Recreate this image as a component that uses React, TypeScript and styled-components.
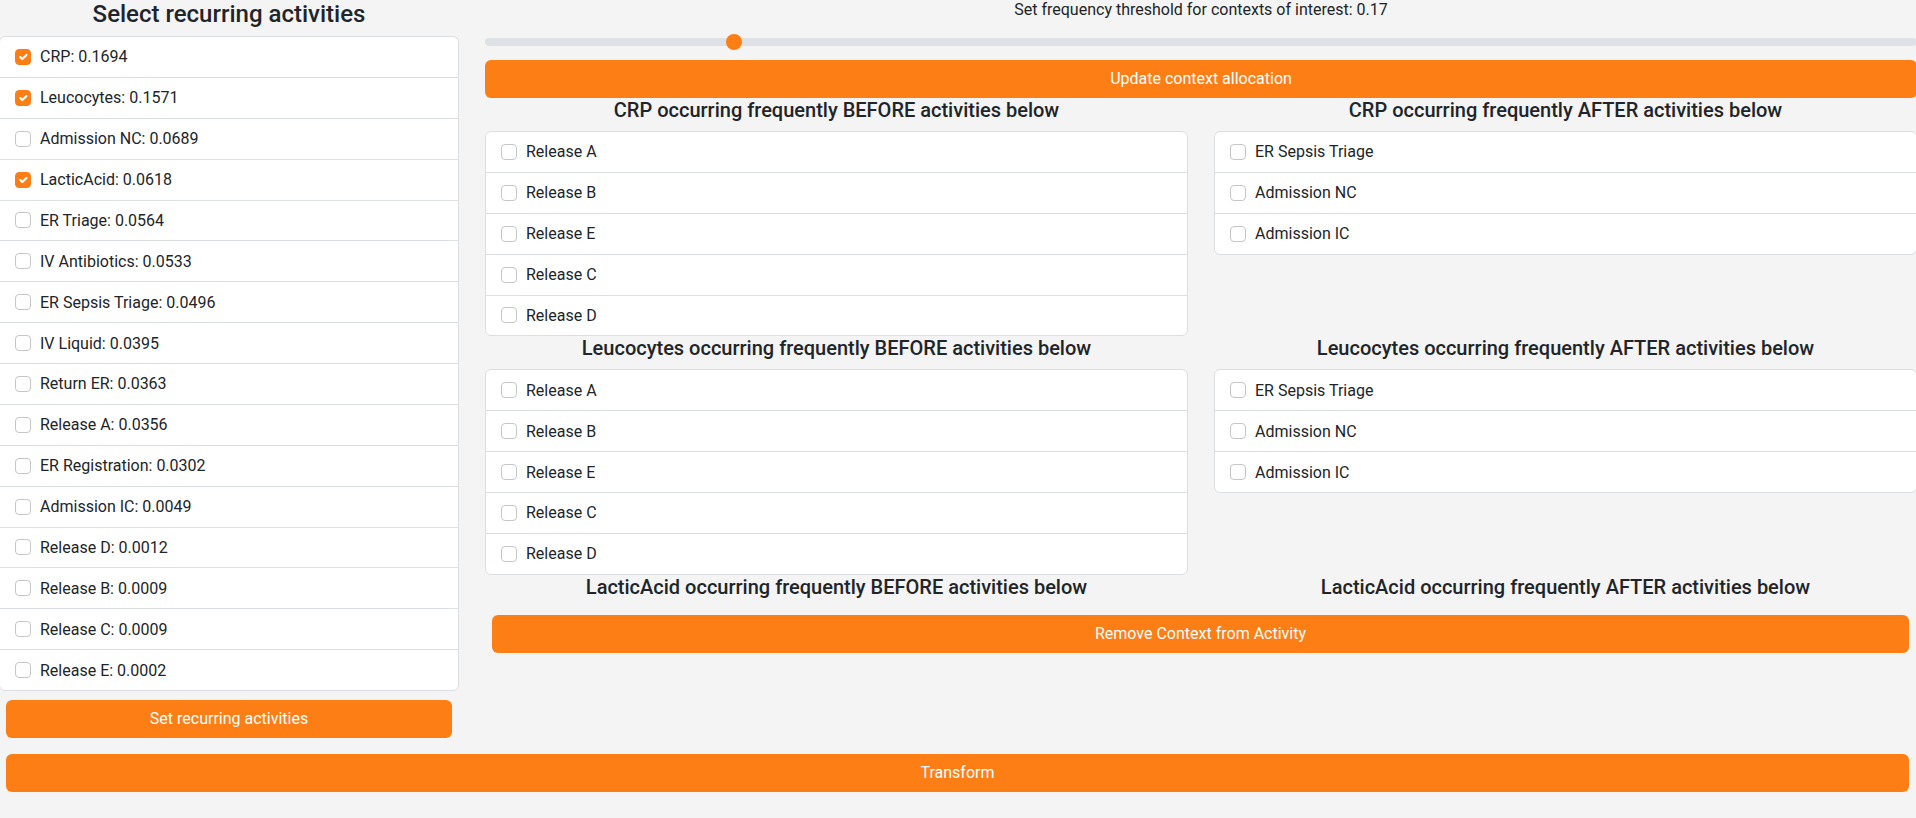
import React from "react";
import styled, { createGlobalStyle } from "styled-components";

const ORANGE = "#fd7e14";

const Global = createGlobalStyle`
  html, body { margin: 0; padding: 0; background: #f4f4f4; overflow: hidden; }
  body {
    font-family: Roboto, "Noto Sans", sans-serif;
    color: #212529;
    font-size: 16px;
  }
  * { box-sizing: border-box; }
`;

const Page = styled.div`
  display: grid;
  grid-template-columns: 460px 1432px;
  column-gap: 26px;
  align-items: start;
  width: 1918px;
  margin-left: -1px;
`;

const LeftColumn = styled.div`
  display: flex;
  flex-direction: column;
`;

const MainColumn = styled.div`
  display: flex;
  flex-direction: column;
`;

const PanelTitle = styled.h4`
  margin: 0 0 7px;
  font-size: 24px;
  line-height: 29px;
  font-weight: 500;
  text-align: center;
`;

const SectionTitle = styled.h5`
  margin: 0 0 8px;
  font-size: 20px;
  line-height: 25px;
  font-weight: 500;
  text-align: center;
`;

const ListBox = styled.ul`
  list-style: none;
  margin: 0;
  padding: 0;
  background: #fff;
  border: 1px solid #dcdfe2;
  border-radius: 6px;
  overflow: hidden;
`;

const ListItem = styled.li`
  box-sizing: content-box;
  display: flex;
  align-items: center;
  height: 39.875px;
  padding: 0 15px;
  font-size: 16px;
  & + & { border-top: 1px solid #dcdfe2; }
`;

const Box = styled.span<{ $checked: boolean }>`
  flex: none;
  display: inline-flex;
  align-items: center;
  justify-content: center;
  width: 16px;
  height: 16px;
  margin-right: 9px;
  border-radius: 4px;
  border: 1px solid ${(p) => (p.$checked ? ORANGE : "#c4c6c8")};
  background: ${(p) => (p.$checked ? ORANGE : "#fff")};
`;

const Button = styled.button<{ $inset?: string }>`
  display: block;
  height: 38px;
  margin: ${(p) => p.$inset ?? "0"};
  padding: 0 12px;
  border: 0;
  border-radius: 6px;
  background: ${ORANGE};
  color: #fff;
  font-family: inherit;
  font-size: 16px;
  line-height: 24px;
  text-align: center;
  cursor: pointer;
`;

const WideButton = styled(Button)`
  grid-column: 1 / -1;
`;

const SliderLabel = styled.div`
  height: 20px;
  font-size: 16px;
  line-height: 20px;
  text-align: center;
`;

const Range = styled.input`
  -webkit-appearance: none;
  appearance: none;
  display: block;
  width: 100%;
  height: 16px;
  margin: 14px 0 10px;
  padding: 0;
  background: transparent;
  &::-webkit-slider-runnable-track {
    height: 8px;
    border-radius: 8px;
    background: #dee2e6;
  }
  &::-webkit-slider-thumb {
    -webkit-appearance: none;
    appearance: none;
    width: 16px;
    height: 16px;
    margin-top: -4px;
    border: 0;
    border-radius: 50%;
    background: ${ORANGE};
  }
`;

const ContextGrid = styled.div`
  display: grid;
  grid-template-columns: 1fr 1fr;
  column-gap: 26px;
  align-items: start;
`;

const Cell = styled.div`
  display: flex;
  flex-direction: column;
`;

const Check = ({ checked }: { checked: boolean }) => (
  <Box $checked={checked}>
    {checked && (
      <svg width="14" height="14" viewBox="0 0 20 20">
        <path
          d="m6 10 3 3 6-6"
          fill="none"
          stroke="#fff"
          strokeWidth="3"
          strokeLinecap="round"
          strokeLinejoin="round"
        />
      </svg>
    )}
  </Box>
);

const activities: [string, string, boolean][] = [
  ["CRP", "0.1694", true],
  ["Leucocytes", "0.1571", true],
  ["Admission NC", "0.0689", false],
  ["LacticAcid", "0.0618", true],
  ["ER Triage", "0.0564", false],
  ["IV Antibiotics", "0.0533", false],
  ["ER Sepsis Triage", "0.0496", false],
  ["IV Liquid", "0.0395", false],
  ["Return ER", "0.0363", false],
  ["Release A", "0.0356", false],
  ["ER Registration", "0.0302", false],
  ["Admission IC", "0.0049", false],
  ["Release D", "0.0012", false],
  ["Release B", "0.0009", false],
  ["Release C", "0.0009", false],
  ["Release E", "0.0002", false],
];

const before = ["Release A", "Release B", "Release E", "Release C", "Release D"];
const after = ["ER Sepsis Triage", "Admission NC", "Admission IC"];

const contexts: { name: string; before: string[]; after: string[] }[] = [
  { name: "CRP", before, after },
  { name: "Leucocytes", before, after },
  { name: "LacticAcid", before: [], after: [] },
];

const CheckList = ({ items }: { items: string[] }) =>
  items.length === 0 ? null : (
    <ListBox>
      {items.map((it) => (
        <ListItem key={it}>
          <Check checked={false} />
          {it}
        </ListItem>
      ))}
    </ListBox>
  );

export default function App() {
  const [threshold, setThreshold] = React.useState(0.17);
  return (
    <>
      <Global />
      <Page>
        <LeftColumn>
          <PanelTitle>Select recurring activities</PanelTitle>
          <ListBox>
            {activities.map(([name, val, checked]) => (
              <ListItem key={name}>
                <Check checked={checked} />
                {name}: {val}
              </ListItem>
            ))}
          </ListBox>
          <Button $inset="9px 7px 0">Set recurring activities</Button>
        </LeftColumn>
        <MainColumn>
          <SliderLabel>
            Set frequency threshold for contexts of interest: {threshold}
          </SliderLabel>
          <Range
            type="range"
            min={0}
            max={1}
            step={0.01}
            value={threshold}
            onChange={(e) => setThreshold(parseFloat(e.target.value))}
          />
          <Button>Update context allocation</Button>
          <ContextGrid>
            {contexts.map((c) => (
              <React.Fragment key={c.name}>
                <Cell>
                  <SectionTitle>{c.name} occurring frequently BEFORE activities below</SectionTitle>
                  <CheckList items={c.before} />
                </Cell>
                <Cell>
                  <SectionTitle>{c.name} occurring frequently AFTER activities below</SectionTitle>
                  <CheckList items={c.after} />
                </Cell>
              </React.Fragment>
            ))}
          </ContextGrid>
          <Button $inset="7px 8px 0 7px">Remove Context from Activity</Button>
        </MainColumn>
        <WideButton $inset="16px 8px 0 7px">Transform</WideButton>
      </Page>
    </>
  );
}
